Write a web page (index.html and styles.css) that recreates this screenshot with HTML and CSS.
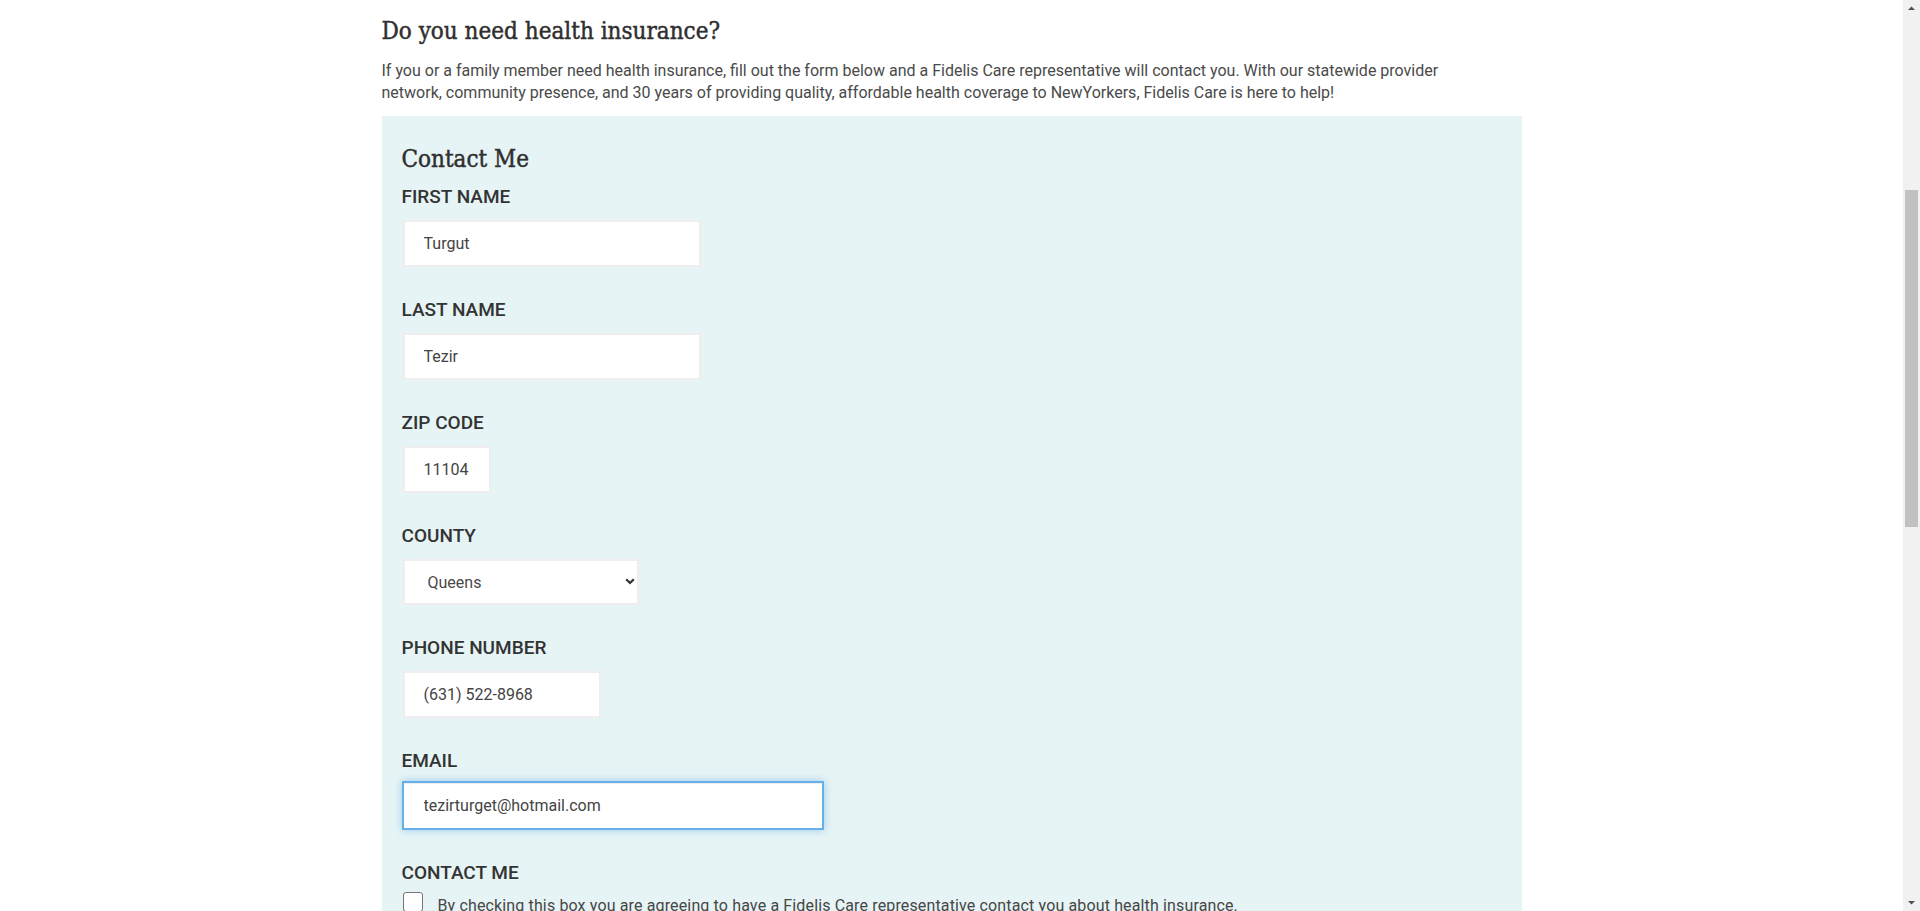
FILE: index.html
```html
<!DOCTYPE html>
<html lang="en">
<head>
<meta charset="utf-8">
<title>Do you need health insurance?</title>
<link rel="stylesheet" href="styles.css">
</head>
<body>
<div class="viewport">
  <main class="page">
    <section class="container">
      <h2 class="title">Do you need health insurance?</h2>
      <p class="intro">If you or a family member need health insurance, fill out the form below and a Fidelis Care representative will contact you. With our statewide provider<br>network, community presence, and 30 years of providing quality, affordable health coverage to NewYorkers, Fidelis Care is here to help!</p>
      <form class="contact-box">
        <h3 class="box-title">Contact Me</h3>
        <div class="field">
          <label class="label" for="fn">FIRST NAME</label>
          <input class="input input-name" id="fn" type="text" value="Turgut">
        </div>
        <div class="field">
          <label class="label" for="ln">LAST NAME</label>
          <input class="input input-name" id="ln" type="text" value="Tezir">
        </div>
        <div class="field">
          <label class="label" for="zip">ZIP CODE</label>
          <input class="input input-zip" id="zip" type="text" value="11104">
        </div>
        <div class="field">
          <label class="label" for="county">COUNTY</label>
          <div class="select-wrap">
            <select class="input select" id="county">
              <option>Queens</option>
            </select>
            <svg class="chevron" width="10" height="7" viewBox="0 0 10 7"><path d="M1.2 1.2 L5 5 L8.8 1.2" fill="none" stroke="#333" stroke-width="2.2"/></svg>
          </div>
        </div>
        <div class="field">
          <label class="label" for="phone">PHONE NUMBER</label>
          <input class="input input-phone" id="phone" type="text" value="(631) 522-8968">
        </div>
        <div class="field field-email">
          <label class="label" for="email">EMAIL</label>
          <input class="input input-email" id="email" type="text" value="tezirturget@hotmail.com">
        </div>
        <div class="field field-check">
          <span class="label">CONTACT ME</span>
          <label class="check-row">
            <input class="checkbox" type="checkbox">
            <span class="check-text">By checking this box you are agreeing to have a Fidelis Care representative contact you about health insurance.</span>
          </label>
        </div>
      </form>
    </section>
  </main>
  <div class="scrollbar">
    <svg class="sb-arrow" width="17" height="17" viewBox="0 0 17 17"><path d="M5 10 L8.5 6.5 L12 10 Z" fill="#505050"/></svg>
    <div class="sb-track">
      <div class="sb-thumb"></div>
    </div>
    <svg class="sb-arrow" width="17" height="17" viewBox="0 0 17 17"><path d="M5 7 L8.5 10.5 L12 7 Z" fill="#505050"/></svg>
  </div>
</div>
</body>
</html>
```
FILE: styles.css
```css
html, body {
  margin: 0;
  padding: 0;
  height: 911px;
  overflow: hidden;
  background: #ffffff;
}

.viewport {
  display: flex;
  height: 911px;
}

.page {
  flex: 1;
  overflow: hidden;
  padding-top: 17px;
}

.container {
  width: 1140px;
  margin: 0 auto;
}

.title {
  margin: 0 0 14px 0;
  font-family: "DejaVu Serif Condensed", "DejaVu Serif", serif;
  font-stretch: condensed;
  font-weight: normal;
  font-size: 24px;
  line-height: 29px;
  color: #2f2f2f;
  -webkit-text-stroke: 0.45px #2f2f2f;
}

.intro {
  margin: 0 0 12px 0;
  font-family: Roboto, "Liberation Sans", sans-serif;
  font-size: 16px;
  line-height: 22px;
  color: #4a4a4a;
}

.contact-box {
  background: #e6f4f5;
  padding: 29px 20px 40px 20px;
  display: flex;
  flex-direction: column;
}

.box-title {
  margin: 0 0 11px 0;
  font-family: "DejaVu Serif Condensed", "DejaVu Serif", serif;
  font-stretch: condensed;
  font-weight: normal;
  font-size: 24px;
  line-height: 29px;
  color: #2f2f2f;
  -webkit-text-stroke: 0.45px #2f2f2f;
}

.field {
  display: flex;
  flex-direction: column;
  align-items: flex-start;
  margin-bottom: 31px;
}

.label {
  font-family: Roboto, "Liberation Sans", sans-serif;
  font-weight: 500;
  font-size: 19px;
  line-height: 24px;
  color: #333333;
  margin-bottom: 11px;
}

.input {
  box-sizing: border-box;
  height: 47px;
  margin: 0 0 0 1px;
  padding: 0 19px;
  border: 2px solid #efeded;
  border-radius: 0;
  background: #ffffff;
  font-family: Roboto, "Liberation Sans", sans-serif;
  font-size: 16px;
  color: #444444;
  outline: none;
}

.input-name { width: 298px; }
.input-zip { width: 88px; }
.input-phone { width: 198px; }

.select-wrap {
  position: relative;
  margin-left: 1px;
}

.select {
  -webkit-appearance: none;
  appearance: none;
  width: 236px;
  height: 46px;
  margin: 0;
  padding: 0 0 0 23px;
  color: #4a4a4a;
}

.chevron {
  position: absolute;
  left: 222px;
  top: 19px;
}

.field-email {
  margin-bottom: 31px;
}

.field-email .label {
  margin-bottom: 8px;
}

.input-email {
  width: 422px;
  height: 49px;
  margin-left: 0;
  padding-left: 20px;
  border: 2px solid #66afe9;
  box-shadow: inset 0 1px 1px rgba(0, 0, 0, 0.075), 0 0 8px rgba(102, 175, 233, 0.6);
}

.field-check .label {
  margin-bottom: 7px;
}

.check-row {
  display: flex;
  align-items: flex-start;
  gap: 15px;
  margin-left: 1px;
}

.checkbox {
  -webkit-appearance: none;
  appearance: none;
  box-sizing: border-box;
  width: 20px;
  height: 20px;
  margin: 0;
  border: 1px solid #767676;
  border-radius: 3px;
  background: #ffffff;
  flex: none;
}

.check-text {
  font-family: Roboto, "Liberation Sans", sans-serif;
  font-size: 16px;
  letter-spacing: 0.14px;
  line-height: 22px;
  color: #464646;
  margin-top: 3px;
}

.scrollbar {
  width: 17px;
  flex: none;
  background: #f1f1f1;
  display: flex;
  flex-direction: column;
}

.sb-arrow {
  display: block;
  flex: none;
}

.sb-track {
  flex: 1;
  padding-top: 173px;
}

.sb-thumb {
  width: 13px;
  height: 337px;
  margin-left: 2px;
  background: #c1c1c1;
}
```
